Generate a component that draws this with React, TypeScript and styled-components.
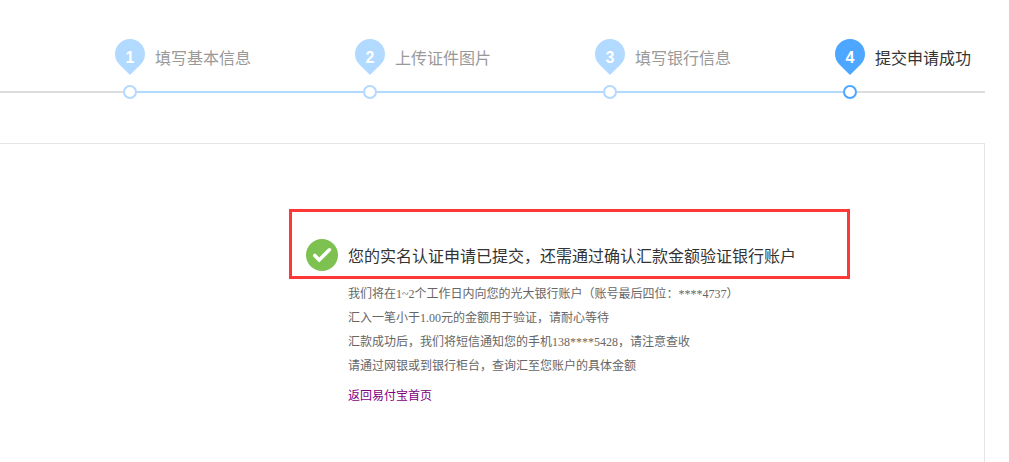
import React from "react";
import styled, { createGlobalStyle } from "styled-components";

const colors = {
  done: "#b2d9ff",
  current: "#4da6ff",
  idle: "#dddddd",
  text: "#333333",
  muted: "#999999",
};

const GlobalStyle = createGlobalStyle`
  *, *::before, *::after { box-sizing: border-box; }
  body {
    margin: 0;
    background: #fff;
    color: ${colors.text};
    font-family: "Noto Sans CJK SC", sans-serif;
  }
`;

const Page = styled.div`
  display: flex;
  flex-direction: column;
  min-height: 100vh;
  padding-right: 24px;
`;

const Progress = styled.nav`
  display: flex;
  align-items: stretch;
  padding-top: 39px;
`;

const Lead = styled.div`
  flex: 0 0 115px;
  display: flex;
  align-items: flex-end;
  padding-bottom: 6px;
`;

const Line = styled.span<{ $color: string; $width?: number }>`
  flex: ${(p) => (p.$width ? `0 0 ${p.$width}px` : "1")};
  height: 2px;
  background: ${(p) => p.$color};
`;

const StepList = styled.ol`
  flex: 1;
  display: flex;
  margin: 0;
  padding: 0;
  list-style: none;
`;

const StepItem = styled.li<{ $last: boolean }>`
  flex: ${(p) => (p.$last ? "0 0 150px" : "1 1 0")};
  display: flex;
  flex-direction: column;
  gap: 10px;
  white-space: nowrap;
`;

const StepHead = styled.div<{ $current: boolean }>`
  display: flex;
  gap: 10px;
  height: 36px;
  color: ${(p) => (p.$current ? colors.text : colors.muted)};
  font-size: 16px;
  line-height: 36px;
`;

const Pin = styled.span`
  display: grid;
  width: 30px;
  height: 36px;

  > * {
    grid-area: 1 / 1;
  }
`;

const PinNumber = styled.span`
  color: #fff;
  font: bold 16px/38px "Liberation Sans", sans-serif;
  text-align: center;
`;

const Track = styled.div`
  display: flex;
  align-items: center;
  height: 14px;
`;

const Dot = styled.span<{ $color: string }>`
  width: 14px;
  height: 14px;
  border: 2px solid ${(p) => p.$color};
  border-radius: 50%;
`;

const Panel = styled.main`
  flex: 1;
  margin-top: 44px;
  padding: 65px 134px 48px 289px;
  border: 1px solid #e5e5e5;
  border-width: 1px 1px 0 0;
`;

const Notice = styled.div`
  display: flex;
  align-items: center;
  gap: 10px;
  padding: 27px 14px 5px;
  border: 3px solid #ff3737;
  white-space: nowrap;
`;

const NoticeTitle = styled.h1`
  margin: 0;
  font-size: 16px;
  font-weight: 400;
  line-height: 32px;
`;

const Details = styled.div`
  padding: 3px 0 0 59px;
  color: #666;
  font: 12px/24px "Liberation Serif", "Noto Sans CJK SC", serif;
  white-space: nowrap;
`;

const Detail = styled.p`
  margin: 0;
`;

const HomeLink = styled.a`
  display: inline-block;
  margin-top: 6px;
  color: #800080;
  text-decoration: none;
`;

const steps = ["填写基本信息", "上传证件图片", "填写银行信息", "提交申请成功"];

const details = [
  "我们将在1~2个工作日内向您的光大银行账户（账号最后四位：****4737）",
  "汇入一笔小于1.00元的金额用于验证，请耐心等待",
  "汇款成功后，我们将短信通知您的手机138****5428，请注意查收",
  "请通过网银或到银行柜台，查询汇至您账户的具体金额",
];

function Step({ label, index }: { label: string; index: number }) {
  const current = index === steps.length - 1;
  const color = current ? colors.current : colors.done;
  return (
    <StepItem $last={current} aria-current={current ? "step" : undefined}>
      <StepHead $current={current}>
        <Pin>
          <svg width="30" height="36" viewBox="0 0 30 36" aria-hidden="true">
            <path
              d="M15 0C6.7 0 0 6.7 0 15c0 4.200 1.600 7.700 4.400 10.400L15 36l10.600-10.600C28.400 22.700 30 19.200 30 15 30 6.700 23.300 0 15 0z"
              fill={color}
            />
          </svg>
          <PinNumber>{index + 1}</PinNumber>
        </Pin>
        <span>{label}</span>
      </StepHead>
      <Track>
        <Line $width={8} $color={index === 0 ? colors.idle : colors.done} />
        <Dot $color={color} />
        <Line $color={current ? colors.idle : colors.done} />
      </Track>
    </StepItem>
  );
}

export default function App() {
  return (
    <>
      <GlobalStyle />
      <Page>
        <Progress>
          <Lead>
            <Line $color={colors.idle} />
          </Lead>
          <StepList>
            {steps.map((label, index) => (
              <Step key={label} label={label} index={index} />
            ))}
          </StepList>
        </Progress>
        <Panel>
          <Notice>
            <svg width="32" height="32" viewBox="0 0 32 32" aria-hidden="true">
              <circle cx="16" cy="16" r="16" fill="#7dc250" />
              <path
                d="M8.800 16.500l4.400 4.500L23.400 10.800"
                fill="none"
                stroke="#fff"
                strokeWidth="3.600"
                strokeLinecap="round"
                strokeLinejoin="miter"
              />
            </svg>
            <NoticeTitle>您的实名认证申请已提交，还需通过确认汇款金额验证银行账户</NoticeTitle>
          </Notice>
          <Details>
            {details.map((line) => (
              <Detail key={line}>{line}</Detail>
            ))}
            <HomeLink href="#">返回易付宝首页</HomeLink>
          </Details>
        </Panel>
      </Page>
    </>
  );
}
